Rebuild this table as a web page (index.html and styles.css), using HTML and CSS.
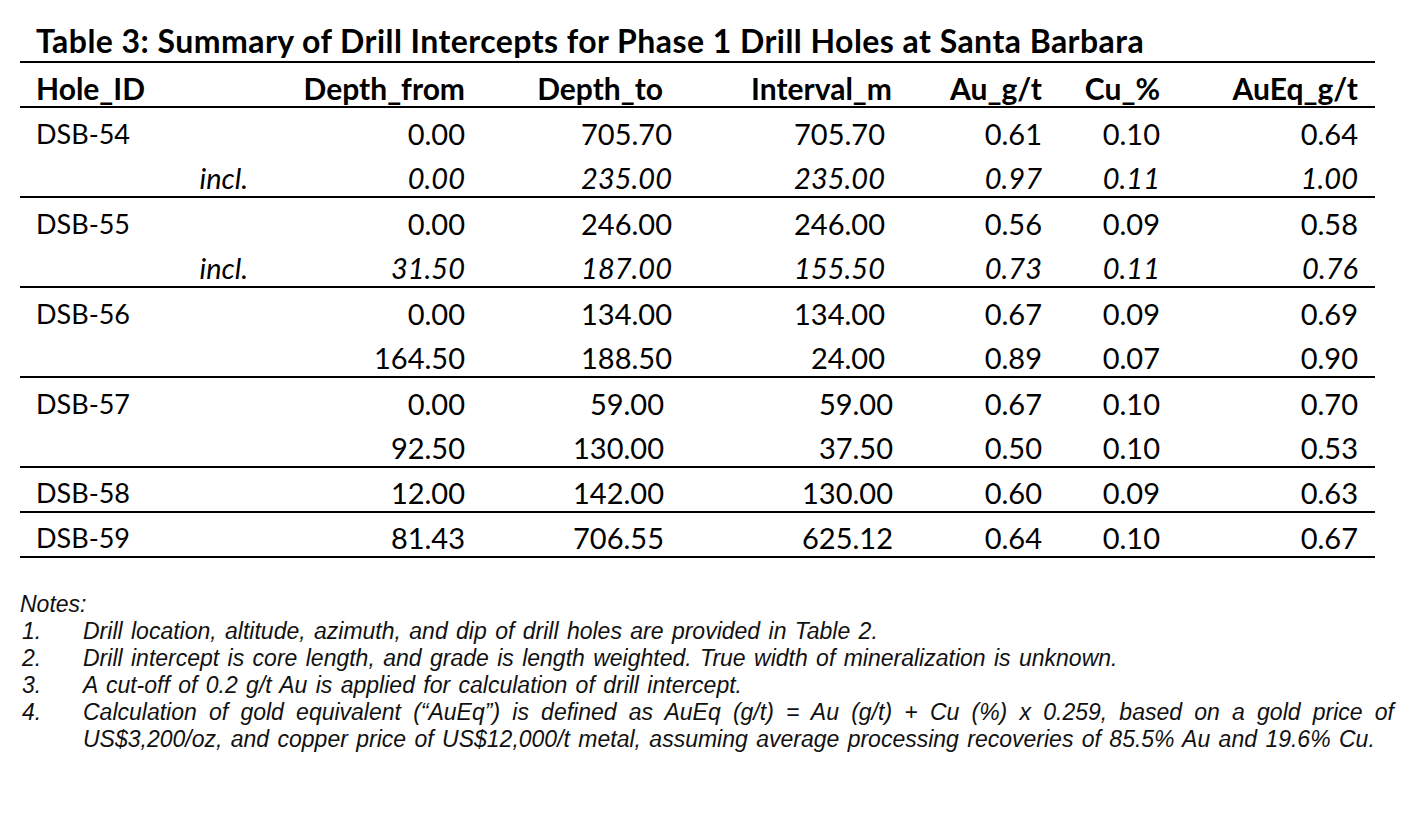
FILE: index.html
```html
<!DOCTYPE html>
<html lang="en">
<head>
<meta charset="utf-8">
<title>Table 3</title>
<link rel="stylesheet" href="styles.css">
</head>
<body>
<div class="page">
  <h1 class="title">Table 3: Summary of Drill Intercepts for Phase 1 Drill Holes at Santa Barbara</h1>
  <table class="data">
    <colgroup>
      <col class="c-hole"><col class="c-note"><col class="c-from"><col class="c-to"><col class="c-int"><col class="c-au"><col class="c-cu"><col class="c-aueq">
    </colgroup>
    <thead>
      <tr>
        <th class="l">Hole_ID</th><th></th><th>Depth_from</th><th class="to">Depth_to</th><th class="int">Interval_m</th><th>Au_g/t</th><th>Cu_%</th><th class="last">AuEq_g/t</th>
      </tr>
    </thead>
    <tbody class="early">
      <tr><td class="l">DSB-54</td><td></td><td>0.00</td><td class="to">705.70</td><td class="int">705.70</td><td>0.61</td><td>0.10</td><td class="last">0.64</td></tr>
      <tr class="it sep"><td class="l"></td><td class="incl">incl.</td><td>0.00</td><td class="to">235.00</td><td class="int">235.00</td><td>0.97</td><td>0.11</td><td class="last">1.00</td></tr>
      <tr><td class="l">DSB-55</td><td></td><td>0.00</td><td class="to">246.00</td><td class="int">246.00</td><td>0.56</td><td>0.09</td><td class="last">0.58</td></tr>
      <tr class="it sep"><td class="l"></td><td class="incl">incl.</td><td>31.50</td><td class="to">187.00</td><td class="int">155.50</td><td>0.73</td><td>0.11</td><td class="last">0.76</td></tr>
      <tr><td class="l">DSB-56</td><td></td><td>0.00</td><td class="to">134.00</td><td class="int">134.00</td><td>0.67</td><td>0.09</td><td class="last">0.69</td></tr>
      <tr class="sep"><td class="l"></td><td></td><td>164.50</td><td class="to">188.50</td><td class="int">24.00</td><td>0.89</td><td>0.07</td><td class="last">0.90</td></tr>
    </tbody>
    <tbody class="late">
      <tr><td class="l">DSB-57</td><td></td><td>0.00</td><td class="to">59.00</td><td class="int">59.00</td><td>0.67</td><td>0.10</td><td class="last">0.70</td></tr>
      <tr class="sep"><td class="l"></td><td></td><td>92.50</td><td class="to">130.00</td><td class="int">37.50</td><td>0.50</td><td>0.10</td><td class="last">0.53</td></tr>
      <tr class="sep"><td class="l">DSB-58</td><td></td><td>12.00</td><td class="to">142.00</td><td class="int">130.00</td><td>0.60</td><td>0.09</td><td class="last">0.63</td></tr>
      <tr class="sep"><td class="l">DSB-59</td><td></td><td>81.43</td><td class="to">706.55</td><td class="int">625.12</td><td>0.64</td><td>0.10</td><td class="last">0.67</td></tr>
    </tbody>
  </table>
  <div class="notes">
    <p class="notes-head">Notes:</p>
    <ol class="note-list">
      <li><span class="num">1.</span><span class="txt">Drill location, altitude, azimuth, and dip of drill holes are provided in Table 2.</span></li>
      <li><span class="num">2.</span><span class="txt">Drill intercept is core length, and grade is length weighted. True width of mineralization is unknown.</span></li>
      <li><span class="num">3.</span><span class="txt">A cut-off of 0.2 g/t Au is applied for calculation of drill intercept.</span></li>
      <li><span class="num">4.</span><span class="txt just">Calculation of gold equivalent (“AuEq”) is defined as AuEq (g/t) = Au (g/t) + Cu (%) x 0.259, based on a gold price of US$3,200/oz, and copper price of US$12,000/t metal, assuming average processing recoveries of 85.5% Au and 19.6% Cu.</span></li>
    </ol>
  </div>
</div>
</body>
</html>
```
FILE: styles.css
```css
html, body {
  margin: 0;
  padding: 0;
  background: #ffffff;
  color: #000000;
}

.page {
  padding: 21px 18px 0 20px;
}

.title {
  margin: 0;
  padding-left: 16px;
  font-family: Lato, "Liberation Sans", sans-serif;
  font-weight: 700;
  font-size: 32px;
  line-height: 40px;
  letter-spacing: 0.45px;
  white-space: nowrap;
}

.data {
  width: 1355px;
  border-collapse: collapse;
  table-layout: fixed;
  font-family: Lato, "Liberation Sans", sans-serif;
  font-size: 29px;
  border-top: 2px solid #000;
}

.c-hole { width: 130px; }
.c-note { width: 106px; }
.c-from { width: 217px; }
.c-to { width: 208px; }
.c-int { width: 220px; }
.c-au { width: 149px; }
.c-cu { width: 118px; }
.c-aueq { width: 207px; }

.data th,
.data td {
  height: 45px;
  box-sizing: border-box;
  padding: 0 8px 1px 0;
  text-align: right;
  vertical-align: bottom;
  line-height: 34px;
  white-space: nowrap;
}

.data th {
  font-weight: 700;
  font-size: 30px;
  border-bottom: 2px solid #000;
}

.data th.to {
  padding-right: 18px;
}

.data th.int {
  padding-right: 9px;
}

.data .early td.to {
  padding-right: 9px;
}

.data .early td.int {
  padding-right: 16px;
}

.data .late td.to {
  padding-right: 17px;
}

.data .late td.int {
  padding-right: 8px;
}

.data .l {
  text-align: left;
  padding-left: 16px;
}

.data td.l {
  font-size: 27px;
}

.data .last {
  padding-right: 17px;
}

.data tr.it td {
  font-style: italic;
}

.data tr.sep td {
  border-bottom: 2px solid #000;
}

.notes {
  margin-top: 33px;
  font-family: "Liberation Sans", Arial, sans-serif;
  font-style: italic;
  font-size: 23px;
  line-height: 27px;
  word-spacing: 2px;
  color: #111;
}

.notes-head {
  margin: 0;
}

.note-list {
  list-style: none;
  margin: 0;
  padding: 0;
}

.note-list li {
  display: flex;
}

.num {
  flex: 0 0 63px;
  box-sizing: border-box;
  padding-left: 2px;
}

.txt {
  flex: 1;
}

.just {
  text-align: justify;
}
```
